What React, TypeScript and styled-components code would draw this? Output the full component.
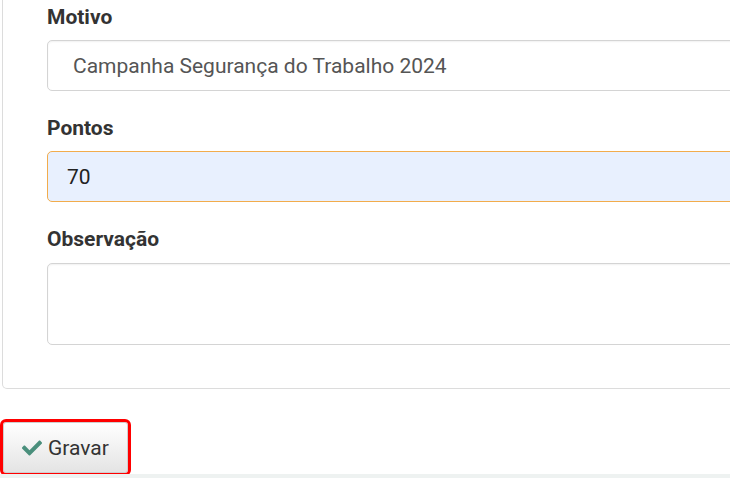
import React from "react";
import styled, { createGlobalStyle } from "styled-components";
import { FaCheck } from "react-icons/fa";

const Global = createGlobalStyle`
  html, body { margin: 0; padding: 0; background: #fff; overflow: hidden; }
  body { font-family: Roboto, "Noto Sans", sans-serif; color: #333; }
  * { box-sizing: border-box; }
`;

const Page = styled.div`
  width: 730px;
  height: 478px;
  display: flex;
  flex-direction: column;
  overflow: hidden;
`;

const Panel = styled.div`
  margin-left: 2px;
  width: 800px;
  border: 1px solid #dcdcdc;
  border-top: none;
  border-radius: 0 0 5px 5px;
  padding: 5px 0 43px 44px;
  display: flex;
  flex-direction: column;
  gap: 25px;
`;

const Field = styled.div<{ $gap?: number }>`
  display: flex;
  flex-direction: column;
  gap: ${(p) => p.$gap ?? 11}px;
`;

const Label = styled.label`
  display: block;
  font-size: 21px;
  line-height: 24px;
  font-weight: 700;
  color: #333;
`;

const Input = styled.div<{ $autofill?: boolean; $indent?: number }>`
  height: 51px;
  display: flex;
  align-items: center;
  padding-left: ${(p) => p.$indent ?? 19}px;
  border: 1px solid ${(p) => (p.$autofill ? "#f2ac4c" : "#d4d4d4")};
  border-radius: 5px;
  background: ${(p) => (p.$autofill ? "#e8f0fe" : "#fff")};
  box-shadow: ${(p) => (p.$autofill ? "none" : "inset 0 1px 2px rgba(0, 0, 0, 0.06)")};
  font-size: 21px;
  color: ${(p) => (p.$autofill ? "#222" : "#555")};
`;

const TextArea = styled.div`
  height: 82px;
  border: 1px solid #d4d4d4;
  border-radius: 5px;
  background: #fff;
  box-shadow: inset 0 1px 2px rgba(0, 0, 0, 0.06);
`;

const ButtonBar = styled.div`
  padding: 33px 0 0 3px;
  display: flex;
`;

const Button = styled.button`
  width: 125px;
  height: 51px;
  display: flex;
  align-items: center;
  gap: 6px;
  padding: 0 0 0 18px;
  border: 1px solid #cfcfcf;
  border-radius: 3px;
  background: linear-gradient(#ffffff, #e4e4e4);
  outline: 3px solid #ff0000;
  font-family: Roboto, "Noto Sans", sans-serif;
  font-size: 21px;
  color: #333;
  cursor: pointer;
  svg { color: #4a8f7c; }
`;

const Strip = styled.div`
  margin-top: 1px;
  flex: 1;
  background: #eef2f1;
`;

export default function App() {
  return (
    <Page>
      <Global />
      <Panel>
        <Field>
          <Label>Motivo</Label>
          <Input $indent={25}>Campanha Segurança do Trabalho 2024</Input>
        </Field>
        <Field>
          <Label>Pontos</Label>
          <Input $autofill>70</Input>
        </Field>
        <Field $gap={12}>
          <Label>Observação</Label>
          <TextArea />
        </Field>
      </Panel>
      <ButtonBar>
        <Button>
          <FaCheck size={20} />
          Gravar
        </Button>
      </ButtonBar>
      <Strip />
    </Page>
  );
}
